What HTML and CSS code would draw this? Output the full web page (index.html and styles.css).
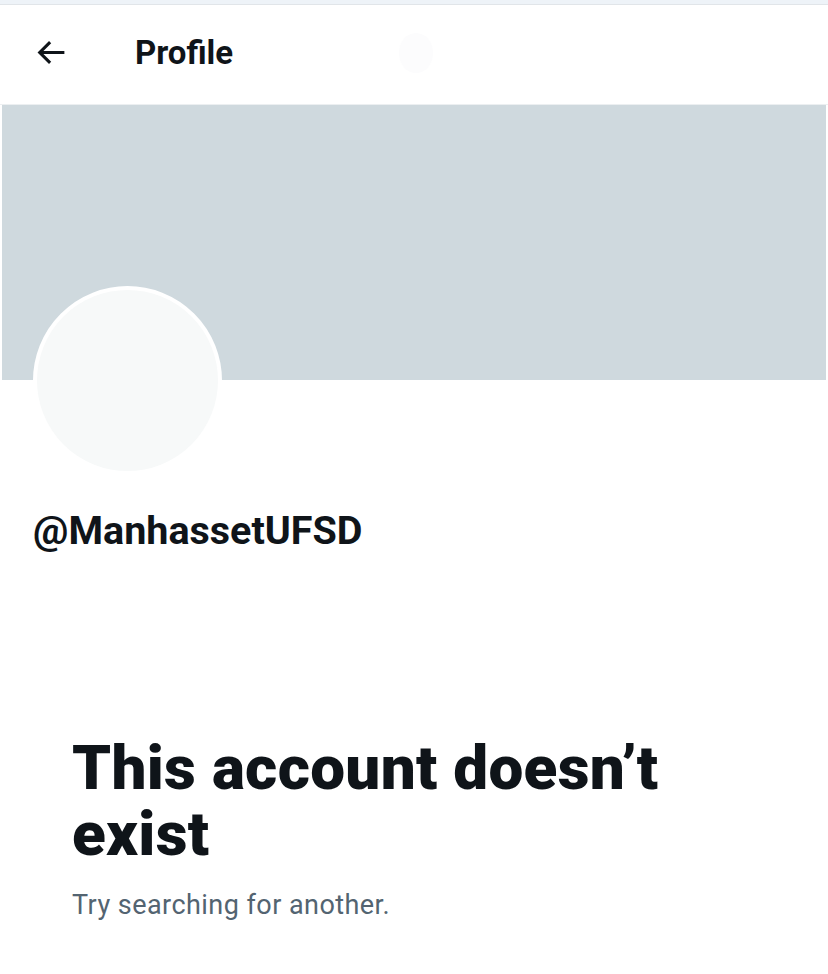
FILE: index.html
```html
<!DOCTYPE html>
<html lang="en">
<head>
  <meta charset="UTF-8" />
  <meta name="viewport" content="width=device-width, initial-scale=1.0"/>
  <title>Profile</title>
  <link rel="stylesheet" href="styles.css">
</head>
<body>

  <div class="top-strip"></div>

  <header class="topbar">
    <button class="back" aria-label="Back">
      <svg viewBox="0 0 24 24" width="37" height="37">
        <path d="M7.414 13l5.043 5.04-1.414 1.42L3.586 12l7.457-7.46 1.414 1.42L7.414 11H21v2H7.414z" fill="#0f1419"/>
      </svg>
    </button>
    <h1>Profile</h1>
    <div class="ghost"></div>
  </header>

  <div class="banner"></div>

  <section class="profile">
    <div class="avatar"></div>
    <div class="handle">@ManhassetUFSD</div>
  </section>

  <section class="empty">
    <h2>This account doesn’t exist</h2>
    <p>Try searching for another.</p>
  </section>

</body>
</html>
```

FILE: styles.css
```css
* {
  box-sizing: border-box;
  margin: 0;
  padding: 0;
}

body {
  background-color: #fff;
  color: #0f1419;
  font-family: Roboto, 'Liberation Sans', sans-serif;
  width: 828px;
  overflow: hidden;
}

.top-strip {
  height: 5px;
  background-color: #eef3f8;
  border-bottom: 1px solid #e1e5e9;
}

.topbar {
  height: 100px;
  display: flex;
  align-items: center;
  padding-left: 32px;
  padding-bottom: 4px;
  border-bottom: 1px solid #eceff1;
}

.back {
  width: 37px;
  height: 37px;
  background: none;
  border: none;
  display: flex;
  align-items: center;
  justify-content: center;
}

.topbar h1 {
  margin-left: 66px;
  font-size: 33px;
  font-weight: 700;
}

.ghost {
  width: 34px;
  height: 40px;
  border-radius: 50%;
  background-color: #fcfcfd;
  margin-left: 166px;
}

.banner {
  height: 275px;
  margin: 0 2px;
  background-color: #cfd9de;
}

.profile {
  padding-left: 33px;
}

.avatar {
  width: 189px;
  height: 189px;
  margin-top: -94px;
  border-radius: 50%;
  background-color: #f7f9f9;
  border: 4px solid #fff;
}

.handle {
  margin-top: 32px;
  font-size: 39.5px;
  line-height: 47px;
  font-weight: 700;
}

.empty {
  padding: 181px 72px 0;
}

.empty h2 {
  font-size: 62px;
  font-weight: 900;
  line-height: 66px;
  letter-spacing: 0.3px;
  max-width: 660px;
}

.empty p {
  margin-top: 22px;
  font-size: 27px;
  letter-spacing: 0.45px;
  color: #536471;
}
```
